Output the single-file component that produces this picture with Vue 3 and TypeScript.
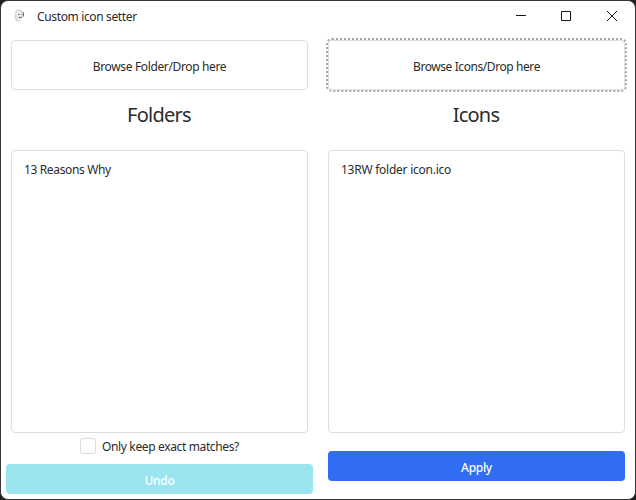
<script setup lang="ts">
const folders: string[] = ['13 Reasons Why']
const icons: string[] = ['13RW folder icon.ico']
</script>

<template>
  <main class="desktop">
    <div class="window">
      <header class="titlebar">
        <svg class="logo" width="12" height="14" viewBox="0 0 12 14">
          <path d="M3.500 1 7 .5l3.500 2.200-.5 5.200-3 4.400-3 .3-2.400-3L1.500 4z" fill="#e9e9e5" />
          <path d="M2 4 3.500 1.600 6 1l3 1M1.800 8l2 3.800 3 .4" fill="none" stroke="#c2c2be" stroke-width=".6" />
          <path d="M5 5.500h1.500M6 8.500l3-.2M8.500 5.500h1M9.300 2.800l1.200 1.200v3.500" fill="none" stroke="#444" stroke-width=".8" />
          <path d="M2 6.500h1v1H2zM4 8h1v1H4z" fill="#dcc06d" />
        </svg>
        <span class="title">Custom icon setter</span>
        <svg class="controls" width="106" height="12" viewBox="0 0 106 12">
          <path d="M1 5.500h10" />
          <path d="M46.500 1.500h9v9h-9z" />
          <path d="M92 1l10 10M102 1 92 11" />
        </svg>
      </header>
      <div class="content">
        <section class="column">
          <button class="browse"><span class="label">Browse Folder/Drop here</span></button>
          <h2><span class="heading-folders">Folders</span></h2>
          <ul class="list">
            <li v-for="name in folders" :key="name"><span class="label">{{ name }}</span></li>
          </ul>
          <label class="option"><i class="box"></i><span class="label option-text">Only keep exact matches?</span></label>
          <button class="action undo"><span>Undo</span></button>
        </section>
        <section class="column">
          <button class="browse focused"><span class="label icon-button">Browse Icons/Drop here</span></button>
          <h2><span class="heading-icons">Icons</span></h2>
          <ul class="list">
            <li v-for="name in icons" :key="name"><span class="label icon-name">{{ name }}</span></li>
          </ul>
          <button class="action apply"><span>Apply</span></button>
        </section>
      </div>
    </div>
  </main>
</template>

<style>
body { background: #202022; overflow: hidden; }
</style>

<style scoped>
* { box-sizing: border-box; }
.desktop { width: 636px; height: 500px; background: #202022; font: 12px/16px "Noto Sans", sans-serif; color: #2b2b2b; }
.window { width: 636px; height: 500px; border: 1px solid #363638; border-radius: 8px; background: #fff; }
.titlebar { height: 29px; display: flex; align-items: center; padding: 0 14px 0 12px; }
.logo { margin-right: 12px; }
.title { padding-top: 2px; letter-spacing: -0.36px; }
.controls { margin-left: auto; fill: none; stroke: #161616; stroke-width: 1; }
.content { display: grid; grid-template-columns: 297px 297px; gap: 20px; padding: 10px 10px 0; }
.column { display: flex; flex-direction: column; }
button { font: inherit; color: inherit; padding: 0; border: 0; display: flex; align-items: center; justify-content: center; }
.browse { height: 50px; background: #fff; border: 1px solid #dedede; border-radius: 4px; padding-top: 3px; }
.focused { outline: 2px dotted #a5a5a5; }
h2 { margin: 0; height: 60px; padding: 11px 1px 0 0; font-size: 20px; line-height: 28px; font-weight: 400; text-align: center; }
.heading-folders { letter-spacing: -0.75px; }
.heading-icons { letter-spacing: -0.8px; }
.list { height: 283px; margin: 0; padding: 11px 12px 9px; list-style: none; border: 1px solid #dedede; border-radius: 4px; }
.option { height: 31px; display: flex; align-items: center; justify-content: center; padding-bottom: 5px; gap: 6px; }
.option-text { padding-top: 2px; }
.box { width: 16px; height: 16px; border: 1px solid #dedede; border-radius: 2px; }
.action { height: 30px; border-radius: 4px; color: #fff; font-weight: 500; letter-spacing: -0.3px; padding-top: 3px; }
.undo { margin: 0 -5px; background: #9ae5f0; }
.apply { margin-top: 18px; background: #306df3; }
.label { letter-spacing: -0.36px; white-space: nowrap; }
.icon-button { letter-spacing: -0.42px; }
.icon-name { letter-spacing: -0.25px; }
</style>
